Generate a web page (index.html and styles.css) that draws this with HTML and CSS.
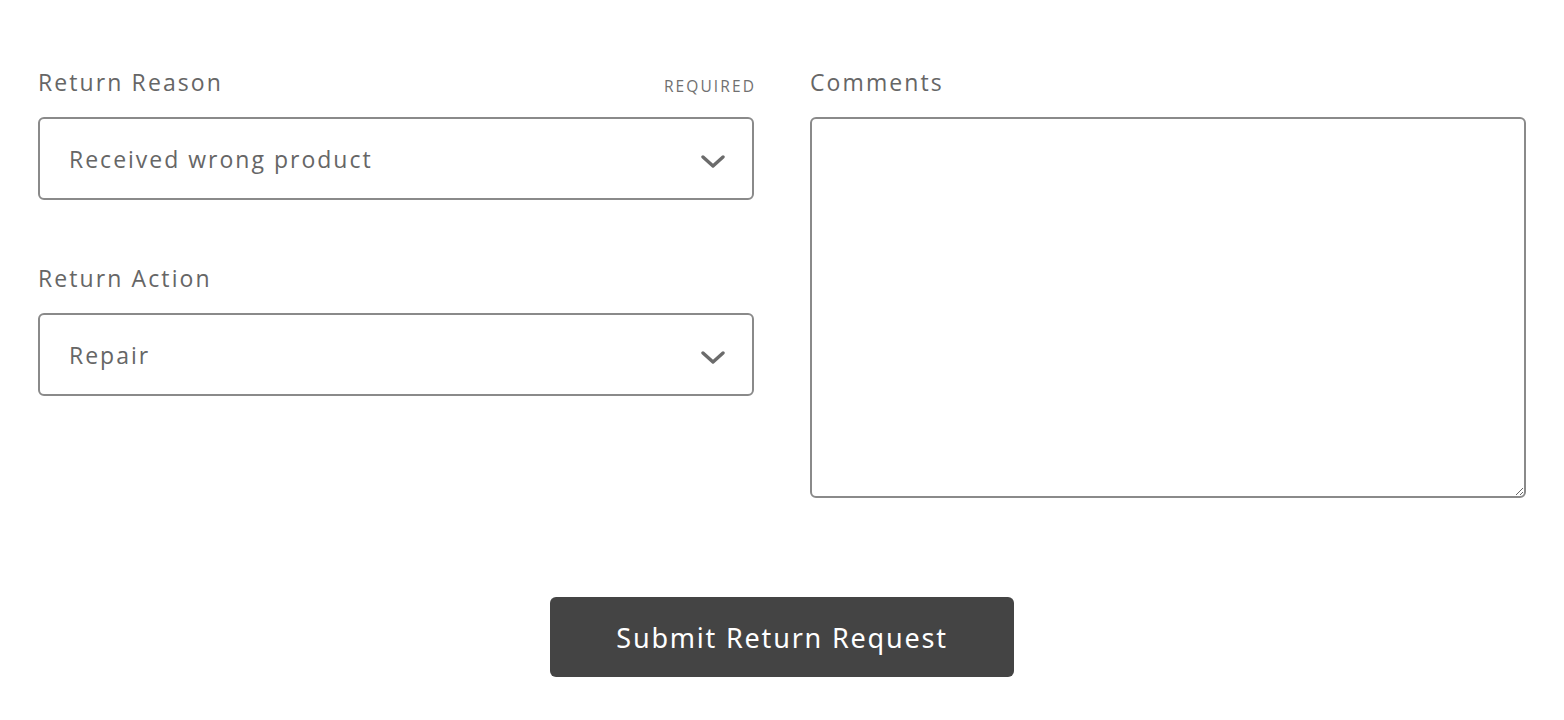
FILE: index.html
```html
<!DOCTYPE html>
<html>
<head>
<meta charset="utf-8">
<link rel="stylesheet" href="styles.css">
</head>
<body>
<form class="form">
  <div class="grid">
    <div class="col">
      <div class="field">
        <div class="label-row">
          <span class="label">Return Reason</span>
          <span class="required">REQUIRED</span>
        </div>
        <div class="select">
          <span>Received wrong product</span>
          <svg class="chev" width="24" height="14" viewBox="0 0 24 14"><path d="M2 2 L12 11 L22 2" fill="none" stroke="#6b6b6b" stroke-width="3.4" stroke-linecap="round" stroke-linejoin="round"/></svg>
        </div>
      </div>
      <div class="field second">
        <div class="label-row">
          <span class="label">Return Action</span>
        </div>
        <div class="select">
          <span>Repair</span>
          <svg class="chev" width="24" height="14" viewBox="0 0 24 14"><path d="M2 2 L12 11 L22 2" fill="none" stroke="#6b6b6b" stroke-width="3.4" stroke-linecap="round" stroke-linejoin="round"/></svg>
        </div>
      </div>
    </div>
    <div class="col">
      <div class="field">
        <div class="label-row">
          <span class="label">Comments</span>
        </div>
        <textarea class="textarea"></textarea>
      </div>
    </div>
  </div>
  <div class="actions">
    <button type="button" class="submit">Submit Return Request</button>
  </div>
</form>
</body>
</html>
```
FILE: styles.css
```css
html, body {
  margin: 0;
  padding: 0;
  background: #ffffff;
}
body {
  font-family: "Open Sans", "Liberation Sans", sans-serif;
  color: #666666;
}
.form {
  padding: 64px 38px 0 38px;
}
.grid {
  display: grid;
  grid-template-columns: 1fr 1fr;
  column-gap: 56px;
}
.col {
  display: flex;
  flex-direction: column;
}
.field.second {
  margin-top: 60px;
}
.label-row {
  display: flex;
  justify-content: space-between;
  align-items: center;
  height: 36px;
  margin-bottom: 17px;
}
.label {
  font-size: 23px;
  letter-spacing: 2.1px;
  color: #666;
}
.required {
  font-size: 15.5px;
  letter-spacing: 2.1px;
  color: #707070;
  padding-top: 7px;
  margin-right: -2px;
}
.select {
  box-sizing: border-box;
  height: 83px;
  border: 2px solid #8a8a8a;
  border-radius: 6px;
  display: flex;
  align-items: center;
  justify-content: space-between;
  padding: 0 28px 0 29px;
  font-size: 23px;
  letter-spacing: 2px;
  color: #666;
}
.chev {
  margin-top: 6px;
  margin-right: -1px;
}
.textarea {
  box-sizing: border-box;
  display: block;
  width: 100%;
  height: 381px;
  border: 2px solid #8a8a8a;
  border-radius: 6px;
  resize: vertical;
  margin: 0;
  font-family: inherit;
  outline: none;
}
.actions {
  display: flex;
  justify-content: center;
  margin-top: 99px;
}
.submit {
  width: 464px;
  height: 80px;
  background: #444444;
  color: #ffffff;
  border: none;
  border-radius: 6px;
  font-family: "Noto Sans", "Open Sans", sans-serif;
  font-size: 27px;
  letter-spacing: 1.8px;
  cursor: pointer;
}
```
